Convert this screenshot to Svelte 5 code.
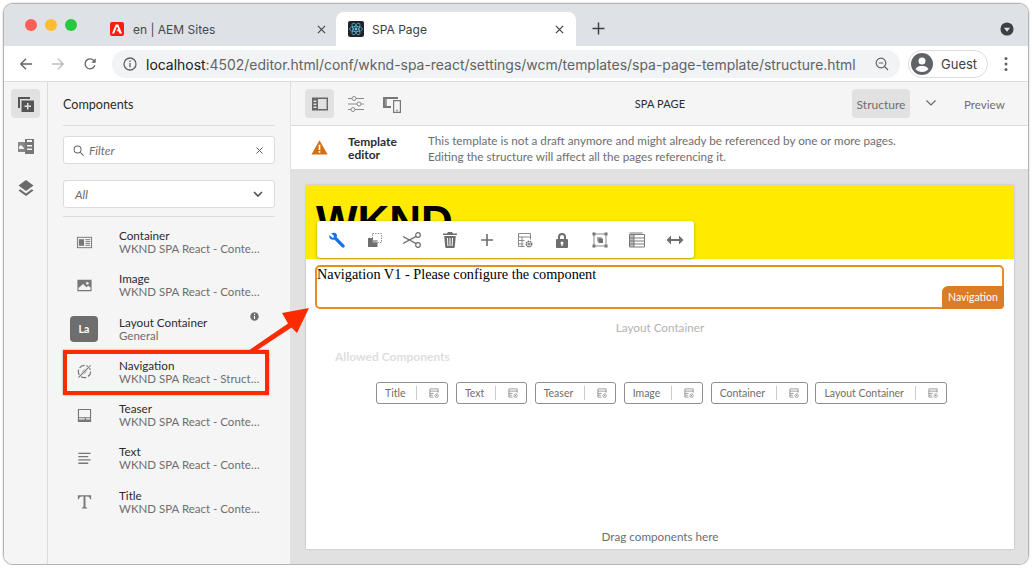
<script>
	const icons = {
		container: '<rect x="1.500" y="3.500" width="15" height="11" fill="none" stroke="#777" stroke-width="1"/><rect x="3" y="5.500" width="5.500" height="7" fill="#777"/><path d="M10 6h5M10 8h5M10 10h5M10 12h5" stroke="#777"/>',
		image: '<path fill="#777" fill-rule="evenodd" d="M1.500 3h15v12h-15zM12 5.200a1.500 1.500 0 1 0 0 3 1.500 1.500 0 0 0 0-3zM2.600 13.800h12.800v-2.600l-2.400-2-2 1.600-3.400-3.400-5 4.200z"/>',
		nav: '<circle cx="9" cy="9" r="6.500" fill="none" stroke="#777" stroke-width="1.300" stroke-dasharray="6 2"/><path fill="#777" d="M13.500 4.500 7.600 7.600 4.500 13.500l5.900-3.100z"/><path d="M2 16 16 2" stroke="#f5f5f5" stroke-width="2.400"/><path d="M2.500 15.500 15.500 2.500" stroke="#777" stroke-width="1.100"/>',
		teaser: '<path fill="#777" fill-rule="evenodd" d="M2 2h14v14H2zM3.200 3.200v7.600h11.600V3.200zM3.200 12v1.200h6V12zm7.400 0v1.200h4.200V12z"/>',
		text: '<path stroke="#777" stroke-width="1.400" d="M2.500 3.500h13M2.500 7h10.500M2.500 10.500h13M2.500 14h10.500"/>',
		title: '<path fill="#777" d="M2 2.500h14v4.200h-1.200c-.2-2-.9-3-2.600-3H10v10.600c0 .8.500 1 1.800 1v1.200H6.200v-1.200c1.300 0 1.800-.2 1.800-1V3.700H5.800c-1.700 0-2.400 1-2.600 3H2z"/>'
	};

	const components = [
		{ name: 'Container', group: 'WKND SPA React - Content', icon: 'container' },
		{ name: 'Image', group: 'WKND SPA React - Content', icon: 'image' },
		{ name: 'Layout Container', group: 'General', badge: 'La' },
		{ name: 'Navigation', group: 'WKND SPA React - Structure', icon: 'nav' },
		{ name: 'Teaser', group: 'WKND SPA React - Content', icon: 'teaser' },
		{ name: 'Text', group: 'WKND SPA React - Content', icon: 'text' },
		{ name: 'Title', group: 'WKND SPA React - Content', icon: 'title' }
	];

	const allowed = ['Title', 'Text', 'Teaser', 'Image', 'Container', 'Layout Container'];

	const tools = [
		'<path fill="#1473e6" d="M3.200 2.300 6 5.100l-.3 1.300-1.400.3L1.500 4C1 6 1.500 7.800 3.400 8.500c1 .4 2 .3 2.900-.1l7.700 7.900c.7.700 1.700.6 2.300 0 .6-.7.600-1.600 0-2.300L8.700 6.200c.4-1 .4-2-.1-3C7.800 1.500 5.100 1.300 3.200 2.300z"/>',
		'<path fill="#6e6e6e" d="M2 7h5v4.500h4.500V16H2z"/><path fill="#6e6e6e" opacity=".6" d="M7 9h4.500v2.500H7z"/><rect x="6.500" y="2.500" width="9" height="9" fill="none" stroke="#8a8a8a" stroke-dasharray="1.400 1.200"/>',
		'<g fill="none" stroke="#6e6e6e" stroke-width="1.200"><circle cx="15" cy="4" r="2.300"/><circle cx="15" cy="14" r="2.300"/><path d="M13.200 5.400 0 12.500M13.200 12.600 0 5.500"/></g>',
		'<path fill="#6e6e6e" fill-rule="evenodd" d="M7 1h4l1 1.500h4V4H2V2.500h4zM3.200 5h11.600l-1 11a1 1 0 0 1-1 1H5.200a1 1 0 0 1-1-1zM6 7l.4 8h1L7 7zm2.500 0v8h1V7zm2.500 0-.4 8h1L12 7z"/>',
		'<path fill="#6e6e6e" d="M8.200 3h1.600v5.200H15v1.600H9.800V15H8.200V9.800H3V8.200h5.200z"/>',
		'<g fill="none" stroke="#8a8a8a"><path d="M8.500 15.500h-6v-13h12v6"/><path d="M2.500 6h12M2.500 9.500h6M2.500 13h5M6 6v9.500"/></g><g fill="none" stroke="#6e6e6e"><circle cx="13" cy="13" r="2.700" stroke-width="1.500" stroke-dasharray="1.600 .6"/><circle cx="13" cy="13" r="1"/></g>',
		'<path fill="#6e6e6e" fill-rule="evenodd" d="M5 8V6a4 4 0 1 1 8 0v2h1a1 1 0 0 1 1 1v7a1 1 0 0 1-1 1H4a1 1 0 0 1-1-1V9a1 1 0 0 1 1-1zm2 0h4V6a2 2 0 1 0-4 0zm2 2.500a1.500 1.500 0 0 0-.7 2.800V15h1.400v-1.700A1.500 1.500 0 0 0 9 10.500z"/>',
		'<g fill="#6e6e6e"><rect x="1.500" y="1.500" width="3" height="3"/><rect x="13.500" y="1.500" width="3" height="3"/><rect x="1.500" y="13.500" width="3" height="3"/><rect x="13.500" y="13.500" width="3" height="3"/><rect x="6" y="6" width="4.500" height="4.500" opacity=".6"/><rect x="7.500" y="7.500" width="4.500" height="4.500"/></g><path fill="none" stroke="#8a8a8a" d="M3 3h12v12H3z"/>',
		'<g fill="none" stroke="#7a7a7a"><path d="M1.500 3.500v12.500h15V3.500zM1.500 2h13"/><path d="M6 3.500V16M1.500 7h15M1.500 10h15M1.500 13h15"/></g><path fill="#7a7a7a" opacity=".5" d="M1.500 3.500H6V16H1.500z"/>',
		'<path fill="#6e6e6e" d="M.5 9 5 4.500V8h8V4.500L17.500 9 13 13.500V10H5v3.500z"/>'
	];

	const policyIcon = '<g fill="none" stroke="#808080"><path d="M7.500 13.500h-5v-11h11v5M2.500 5.500h11M2.500 8.500h5M2.500 11h4"/><circle cx="11.500" cy="11.500" r="2.300" stroke-width="1.300" stroke-dasharray="1.300 .5"/></g><circle cx="11.500" cy="11.500" r=".8" fill="#808080"/>';
</script>

<div class="window">
	<div class="tabstrip">
		<div class="lights">
			<span class="light red"></span>
			<span class="light amber"></span>
			<span class="light green"></span>
		</div>
		<div class="tab">
			<svg class="favicon" viewBox="0 0 14 14"><rect width="14" height="14" rx="2" fill="#fa1e0f"/><path fill="#fff" d="M5.700 2.500h2.600L12 11.500H9.500L8.700 9.300H6.600L8 6.700 7 4.300 4.200 11.500H2z"/></svg>
			<span class="tab-title">en | AEM Sites</span>
			<svg class="tab-close" viewBox="0 0 10 10"><path d="M1 1l8 8M9 1l-8 8" stroke="#45484d" stroke-width="1.300"/></svg>
		</div>
		<div class="tab active">
			<svg class="favicon react" viewBox="0 0 16 16">
				<rect width="16" height="16" rx="2" fill="#20232a"/>
				<circle cx="8" cy="8" r="1.400" fill="#5fc6e3"/>
				<g fill="none" stroke="#5fc6e3" stroke-width=".7">
					<ellipse cx="8" cy="8" rx="6.500" ry="2.600"/>
					<ellipse cx="8" cy="8" rx="6.500" ry="2.600" transform="rotate(60 8 8)"/>
					<ellipse cx="8" cy="8" rx="6.500" ry="2.600" transform="rotate(120 8 8)"/>
				</g>
			</svg>
			<span class="tab-title">SPA Page</span>
			<svg class="tab-close" viewBox="0 0 10 10"><path d="M1 1l8 8M9 1l-8 8" stroke="#3c4043" stroke-width="1.300"/></svg>
		</div>
		<svg class="new-tab" viewBox="0 0 14 14"><path d="M7 .5v13M.5 7h13" stroke="#3c4043" stroke-width="1.600"/></svg>
		<svg class="tab-menu" viewBox="0 0 16 16"><circle cx="8" cy="8" r="7.500" fill="#3c4043"/><path d="M4.500 6.500h7L8 11z" fill="#dee1e6"/></svg>
	</div>

	<div class="browserbar">
		<svg class="nav-btn first" viewBox="0 0 16 16"><path d="M15 8H2M8 2 2 8l6 6" fill="none" stroke="#5f6368" stroke-width="1.500"/></svg>
		<svg class="nav-btn" viewBox="0 0 16 16"><path d="M1 8h13M8 2l6 6-6 6" fill="none" stroke="#b9bcc0" stroke-width="1.500"/></svg>
		<svg class="nav-btn" viewBox="0 0 16 16"><path d="M13.500 9.500A5.700 5.700 0 1 1 12.300 4" fill="none" stroke="#5f6368" stroke-width="1.500"/><path d="M14.500 1.500v5h-5z" fill="#5f6368"/></svg>
		<div class="omnibox">
			<svg class="info" viewBox="0 0 14 14"><circle cx="7" cy="7" r="6" fill="none" stroke="#5f6368" stroke-width="1.300"/><path d="M7 6v4.200M7 3.500v1.400" stroke="#5f6368" stroke-width="1.300"/></svg>
			<span class="url"><b>localhost</b>:4502/editor.html/conf/wknd-spa-react/settings/wcm/templates/spa-page-template/structure.html</span>
			<svg class="zoom-out" viewBox="0 0 14 14"><circle cx="6" cy="6" r="4.800" fill="none" stroke="#5f6368" stroke-width="1.200"/><path d="M3.800 6h4.400M9.500 9.500 13 13" stroke="#5f6368" stroke-width="1.200"/></svg>
		</div>
		<div class="profile">
			<svg class="avatar" viewBox="0 0 22 22"><circle cx="11" cy="11" r="11" fill="#5f6368"/><circle cx="11" cy="8" r="3.500" fill="#fff"/><path d="M4.500 16c1.500-2.600 4-3 6.500-3s5 .4 6.500 3c-1.500 2-3.800 3-6.500 3s-5-1-6.500-3z" fill="#fff"/></svg>
			<span>Guest</span>
		</div>
		<svg class="kebab" viewBox="0 0 4 16"><circle cx="2" cy="2.500" r="1.500"/><circle cx="2" cy="8" r="1.500"/><circle cx="2" cy="13.500" r="1.500"/></svg>
	</div>

	<div class="editor">
		<nav class="rail">
			<button class="rail-btn selected" aria-label="Components">
				<svg viewBox="0 0 18 18"><path fill="#555" d="M1 2h12v2H3v9H1z"/><path fill="#555" fill-rule="evenodd" d="M4.500 5.500H17V17H4.500zM10 8v2.500H7.500V12H10v2.500h1.500V12H14v-1.500h-2.500V8z"/></svg>
			</button>
			<button class="rail-btn" aria-label="Assets">
				<svg viewBox="0 0 18 18"><path fill="#888" d="M1 5h8v10H1z"/><path fill="#f4f4f4" d="M2 9.500l2-1.500 3 3v1H2z"/><path fill="#777" fill-rule="evenodd" d="M8 2h9v15H8zm2 1v2h5V3zm0 5v1.500h5V8zm0 3.500V13h5v-1.500z"/></svg>
			</button>
			<button class="rail-btn" aria-label="Content tree">
				<svg viewBox="0 0 18 18"><path fill="#6a6a6a" d="M9 1 16.500 6.500 9 12 1.500 6.500z"/><path fill="#6a6a6a" d="M3.300 10.300 9 14.500l5.700-4.200 1.800 1.300L9 17l-7.500-5.400z"/></svg>
			</button>
		</nav>

		<aside class="panel">
			<h2>Components</h2>
			<div class="field filter">
				<svg class="search" viewBox="0 0 12 12"><circle cx="5" cy="5" r="3.800" fill="none" stroke="#666" stroke-width="1.100"/><path d="M8 8l3.500 3.500" stroke="#666" stroke-width="1.100"/></svg>
				<em>Filter</em>
				<svg class="clear" viewBox="0 0 8 8"><path d="M.5.500l7 7M7.500.500l-7 7" stroke="#555" stroke-width="1.100"/></svg>
			</div>
			<div class="field select">
				<em>All</em>
				<svg class="chev" viewBox="0 0 10 6"><path d="M1 1l4 4 4-4" fill="none" stroke="#555" stroke-width="1.700"/></svg>
			</div>
			<ul class="list">
				{#each components as c}
					<li class="item">
						<span class="thumb">
							{#if c.badge}
								<span class="badge">{c.badge}</span>
							{:else}
								<svg viewBox="0 0 18 18">{@html icons[c.icon]}</svg>
							{/if}
						</span>
						<span class="meta">
							<span class="name">{c.name}</span>
							<span class="group">{c.group}</span>
						</span>
						{#if c.badge}
							<svg class="item-info" viewBox="0 0 10 10"><circle cx="5" cy="5" r="4.700" fill="#6e6e6e"/><path d="M5 4.300v3.400M5 2v1.300" stroke="#fff" stroke-width="1.200"/></svg>
						{/if}
					</li>
				{/each}
			</ul>
		</aside>

		<main class="main">
			<header class="topbar">
				<button class="top-btn selected" aria-label="Side panel">
					<svg viewBox="0 0 18 18"><path fill="#666" fill-rule="evenodd" d="M1 2.500h16v13H1zM7 4v10h8.600V4zM2.500 5.500V7H5.500V5.500zm0 3V10H5.500V8.500zm0 3V13H5.500v-1.500z"/></svg>
				</button>
				<button class="top-btn" aria-label="Page properties">
					<svg viewBox="0 0 18 18"><g fill="none" stroke="#8a8a8a"><path d="M1 3.500h4M9 3.500h8M1 9h9M14 9h3M1 14.500h3M8 14.500h9"/><circle cx="7" cy="3.500" r="2"/><circle cx="12" cy="9" r="2"/><circle cx="6" cy="14.500" r="2"/></g></svg>
				</button>
				<button class="top-btn" aria-label="Emulator">
					<svg viewBox="0 0 18 18"><path fill="#777" d="M0 2h15v2H2v7h6v2H0z"/><path fill="none" stroke="#777" stroke-width="1.200" d="M10.600 5.600h6.800v11.800h-6.800z"/><path fill="#777" d="M13 14.800h2v1.400h-2zM2 4h2v7H2z" opacity=".7"/></svg>
				</button>
				<span class="page-name">SPA PAGE</span>
				<span class="mode selected">Structure</span>
				<svg class="mode-chev" viewBox="0 0 10 6"><path d="M.5.500 5 5 9.500.500" fill="none" stroke="#666" stroke-width="1.200"/></svg>
				<span class="mode preview">Preview</span>
			</header>

			<section class="notice">
				<svg class="warn" viewBox="0 0 18 18"><path fill="#d56f0e" d="M9 1.200 17.500 16.500H.500z"/><path stroke="#fff" stroke-width="1.800" d="M9 6.200v5.400M9 12.700v1.800"/></svg>
				<strong>Template<br />editor</strong>
				<p>This template is not a draft anymore and might already be referenced by one or more pages.<br />Editing the structure will affect all the pages referencing it.</p>
			</section>

			<div class="canvas">
				<div class="page">
					<div class="hero">WKND</div>
					<div class="nav-box">
						Navigation V1 - Please configure the component
						<span class="tag">Navigation</span>
					</div>
					<div class="layout-label">Layout Container</div>
					<div class="allowed-title">Allowed Components</div>
					<div class="chips">
						{#each allowed as a}
							<div class="chip">
								<span class="chip-name">{a}</span>
								<svg viewBox="0 0 16 16">{@html policyIcon}</svg>
							</div>
						{/each}
					</div>
					<div class="drop">Drag components here</div>

					<div class="toolbar">
						{#each tools as t}
							<svg viewBox="0 0 18 18">{@html t}</svg>
						{/each}
					</div>
				</div>
			</div>
		</main>

		<div class="callout"></div>
		<svg class="arrow" viewBox="0 0 70 50"><path fill="#fb2b00" d="M0 41.500 38 15.500 32 5 59 0 47 25 41.500 19.500 3 45z"/></svg>
	</div>
</div>

<style>
	:global(body) {
		margin: 0;
		background: #fff;
	}

	.window {
		position: relative;
		box-sizing: border-box;
		width: 1026px;
		height: 562px;
		margin: 3px 0 0 3px;
		border: 1px solid #b4b4b4;
		border-radius: 10px;
		overflow: hidden;
		display: flex;
		flex-direction: column;
		font-family: Lato, "Open Sans", sans-serif;
		box-shadow: 0 0 2px rgba(0, 0, 0, 0.25);
	}

	button {
		border: 0;
		padding: 0;
		background: none;
	}

	h2, p, ul {
		margin: 0;
		padding: 0;
	}

	/* browser chrome */
	.tabstrip {
		height: 42px;
		flex: none;
		background: #dee1e6;
		display: flex;
		align-items: flex-end;
		font-family: Inter, Roboto, sans-serif;
		font-size: 12px;
	}

	.lights {
		display: flex;
		gap: 8px;
		padding: 0 0 15px 21px;
		width: 71px;
	}

	.light {
		width: 12px;
		height: 12px;
		border-radius: 50%;
	}

	.red { background: #ff5f57; }
	.amber { background: #febc2e; }
	.green { background: #28c840; }

	.tab {
		width: 240px;
		height: 34px;
		box-sizing: border-box;
		padding-left: 14px;
		padding-right: 8px;
		display: flex;
		align-items: center;
		color: #45484d;
	}

	.tab.active {
		background: #fff;
		border-radius: 8px 8px 0 0;
		padding-left: 12px;
		padding-right: 10px;
		color: #3c4043;
	}

	.favicon {
		width: 14px;
		height: 14px;
		margin-right: 9px;
		flex: none;
	}

	.favicon.react {
		width: 16px;
		height: 16px;
		margin-right: 8px;
	}

	.tab-title {
		flex: 1;
	}

	.tab-close {
		width: 9px;
		height: 9px;
		margin-right: 2px;
	}

	.new-tab {
		width: 13px;
		height: 13px;
		margin: 0 0 11px 16px;
	}

	.tab-menu {
		width: 14px;
		height: 14px;
		margin: 0 0 10px 395px;
	}

	.browserbar {
		height: 36px;
		flex: none;
		box-sizing: border-box;
		background: #fff;
		border-bottom: 1px solid #dadce0;
		display: flex;
		align-items: center;
		font-family: Inter, Roboto, sans-serif;
	}

	.nav-btn {
		width: 14px;
		height: 14px;
		margin-left: 18px;
		flex: none;
	}

	.nav-btn.first {
		margin-left: 15px;
	}

	.omnibox {
		width: 788px;
		height: 28px;
		margin-left: 15px;
		border-radius: 14px;
		background: #f1f3f4;
		display: flex;
		align-items: center;
		padding: 0 11px 0 11px;
		box-sizing: border-box;
	}

	.info {
		width: 14px;
		height: 14px;
		flex: none;
	}

	.url {
		margin-left: 9px;
		padding-top: 1px;
		flex: 1;
		font-size: 13.940px;
		color: #5f6368;
		white-space: nowrap;
	}

	.url b {
		font-weight: 400;
		color: #202124;
	}

	.zoom-out {
		width: 14px;
		height: 14px;
		flex: none;
	}

	.profile {
		width: 80px;
		height: 28px;
		box-sizing: border-box;
		margin-left: 8px;
		border: 1px solid #dadce0;
		border-radius: 14px;
		display: flex;
		align-items: center;
		gap: 8px;
		padding-left: 2px;
		font-size: 13px;
		color: #3c4043;
	}

	.avatar {
		width: 22px;
		height: 22px;
	}

	.kebab {
		width: 4px;
		height: 16px;
		margin-left: 16px;
		fill: #5f6368;
	}

	/* editor */
	.editor {
		flex: 1;
		min-height: 0;
		display: flex;
		position: relative;
		background: #f5f5f5;
	}

	.rail {
		width: 44px;
		box-sizing: border-box;
		flex: none;
		border-right: 1px solid #dcdcdc;
		padding: 7px 7px 0;
		display: flex;
		flex-direction: column;
		gap: 13px;
	}

	.rail-btn, .top-btn {
		width: 29px;
		height: 29px;
		border-radius: 4px;
		display: flex;
		align-items: center;
		justify-content: center;
	}

	.rail-btn svg, .top-btn svg {
		width: 18px;
		height: 18px;
	}

	.rail-btn.selected, .top-btn.selected, .mode.selected {
		background: #e1e1e1;
	}

	.panel {
		width: 242px;
		box-sizing: border-box;
		flex: none;
		padding: 0 15px;
		display: flex;
		flex-direction: column;
	}

	.panel h2 {
		height: 43px;
		line-height: 46px;
		font-size: 12.600px;
		font-weight: 400;
		color: #2c2c2c;
		border-bottom: 1px solid #dcdcdc;
	}

	.field {
		height: 28px;
		box-sizing: border-box;
		background: #fff;
		border: 1px solid #dcdcdc;
		border-radius: 3px;
		display: flex;
		align-items: center;
		font-size: 12px;
		color: #6e6e6e;
	}

	.field em {
		flex: 1;
	}

	.filter {
		margin-top: 10px;
		padding: 0 11px 0 9px;
		gap: 5px;
	}

	.search {
		width: 11px;
		height: 11px;
	}

	.clear {
		width: 7px;
		height: 7px;
	}

	.select {
		margin-top: 16px;
		padding: 0 11px;
	}

	.chev {
		width: 10px;
		height: 6px;
	}

	.list {
		list-style: none;
		margin-top: 8px;
		padding-top: 11px;
		border-top: 1px solid #dcdcdc;
		display: flex;
		flex-direction: column;
		gap: 15.300px;
	}

	.item {
		display: flex;
		align-items: center;
		height: 28px;
		position: relative;
	}

	.thumb {
		width: 42px;
		margin-right: 14px;
		display: flex;
		justify-content: center;
		flex: none;
	}

	.thumb svg {
		width: 17px;
		height: 17px;
	}

	.badge {
		width: 28px;
		height: 26px;
		border-radius: 4px;
		background: #6e6e6e;
		color: #fff;
		font-size: 10.500px;
		font-weight: 700;
		text-align: center;
		line-height: 26px;
	}

	.meta {
		display: flex;
		flex-direction: column;
		min-width: 0;
	}

	.name {
		font-size: 11.700px;
		line-height: 14px;
		color: #2c2c2c;
	}

	.group {
		font-size: 11.500px;
		line-height: 14px;
		color: #6e6e6e;
		width: 141px;
		white-space: nowrap;
		overflow: hidden;
		text-overflow: ellipsis;
	}

	.item-info {
		position: absolute;
		left: 187px;
		top: -3px;
		width: 9px;
		height: 9px;
	}

	.main {
		flex: 1;
		min-width: 0;
		display: flex;
		flex-direction: column;
		border-left: 1px solid #e1e1e1;
	}

	.topbar {
		height: 44px;
		box-sizing: border-box;
		flex: none;
		padding-left: 14px;
		border-bottom: 1px solid #dcdcdc;
		display: flex;
		align-items: center;
		gap: 7px;
	}

	.page-name {
		width: 432px;
		box-sizing: border-box;
		padding-left: 62px;
		text-align: center;
		font-size: 11px;
		color: #2c2c2c;
		letter-spacing: 0.1px;
	}

	.mode {
		font-size: 12px;
		color: #6e6e6e;
		height: 29px;
		line-height: 31px;
		border-radius: 4px;
	}

	.mode.selected {
		width: 58px;
		text-align: center;
	}

	.mode.preview {
		font-size: 11.600px;
	}

	.mode-chev {
		width: 10px;
		height: 6px;
		margin: 0 21px 2px 9px;
	}

	.notice {
		height: 43px;
		flex: none;
		background: #fff;
		display: flex;
		align-items: center;
		padding-left: 20px;
		box-sizing: border-box;
	}

	.warn {
		width: 17px;
		height: 17px;
		flex: none;
	}

	.notice strong {
		width: 80px;
		margin-left: 20px;
		padding-top: 1px;
		font-size: 12px;
		line-height: 13px;
		color: #2c2c2c;
		font-weight: 700;
	}

	.notice p {
		padding-top: 1px;
		font-size: 11.700px;
		line-height: 16px;
		color: #6e6e6e;
	}

	.canvas {
		flex: 1;
		min-height: 0;
		background: #e1e1e1;
		padding: 16px 14px 15px 15px;
		display: flex;
	}

	.page {
		flex: 1;
		background: #fff;
		display: flex;
		flex-direction: column;
		position: relative;
		box-shadow: 0 0 2px rgba(0, 0, 0, 0.2);
	}

	.hero {
		height: 74px;
		flex: none;
		box-sizing: border-box;
		background: #ffea00;
		padding: 9px 0 0 10px;
		overflow: hidden;
		font-family: "Liberation Sans", Arial, sans-serif;
		font-size: 44px;
		font-weight: 700;
		line-height: 56px;
		color: #000;
	}

	.nav-box {
		position: relative;
		height: 44px;
		box-sizing: border-box;
		margin: 6px 10px 0 9px;
		border: 2px solid #e98b24;
		border-radius: 5px;
		font-family: "Liberation Serif", "Times New Roman", serif;
		font-size: 14.300px;
		line-height: 15px;
		color: #000;
	}

	.tag {
		position: absolute;
		right: -2px;
		bottom: -2px;
		width: 62px;
		height: 23px;
		background: #db7c26;
		border-radius: 6px 0 4px 0;
		color: #fff;
		font-family: Lato, sans-serif;
		font-size: 10.500px;
		line-height: 23px;
		text-align: center;
	}

	.layout-label {
		margin-top: 11px;
		text-align: center;
		font-size: 11.700px;
		line-height: 14px;
		color: #b3b3b3;
	}

	.allowed-title {
		margin: 16px 0 0 29px;
		font-size: 12px;
		line-height: 14px;
		font-weight: 700;
		color: #dedede;
	}

	.chips {
		margin: 18px 0 0 70px;
		display: flex;
		gap: 7.400px;
	}

	.chip {
		height: 22px;
		box-sizing: border-box;
		border: 1px solid #8e8e8e;
		border-radius: 3px;
		display: flex;
		align-items: center;
		padding: 0 7px 0 8px;
		font-size: 10.500px;
		color: #6e6e6e;
	}

	.chip-name {
		padding-right: 11px;
		margin-right: 11px;
		line-height: 14px;
		border-right: 1px solid #ccc;
	}

	.chip svg {
		width: 12px;
		height: 12px;
	}

	.drop {
		margin-top: auto;
		padding-bottom: 6px;
		text-align: center;
		font-size: 11.700px;
		line-height: 14px;
		color: #6e6e6e;
	}

	/* floats over the yellow hero */
	.toolbar {
		position: absolute;
		left: 11px;
		top: 36px;
		width: 377px;
		height: 37px;
		box-sizing: border-box;
		padding: 0 10px 0 11px;
		background: #fff;
		border-radius: 3px;
		box-shadow: 0 1px 3px rgba(0, 0, 0, 0.35);
		display: flex;
		align-items: center;
		justify-content: space-between;
	}

	.toolbar svg {
		width: 18px;
		height: 18px;
	}

	/* annotation drawn over the screenshot */
	.callout {
		position: absolute;
		left: 59px;
		top: 268px;
		width: 206px;
		height: 45px;
		box-sizing: border-box;
		border: 4px solid #fb2b00;
		box-shadow: 0 0 2px rgba(0, 0, 0, 0.4);
	}

	.arrow {
		position: absolute;
		left: 246px;
		top: 226px;
		width: 70px;
		height: 50px;
	}
</style>
